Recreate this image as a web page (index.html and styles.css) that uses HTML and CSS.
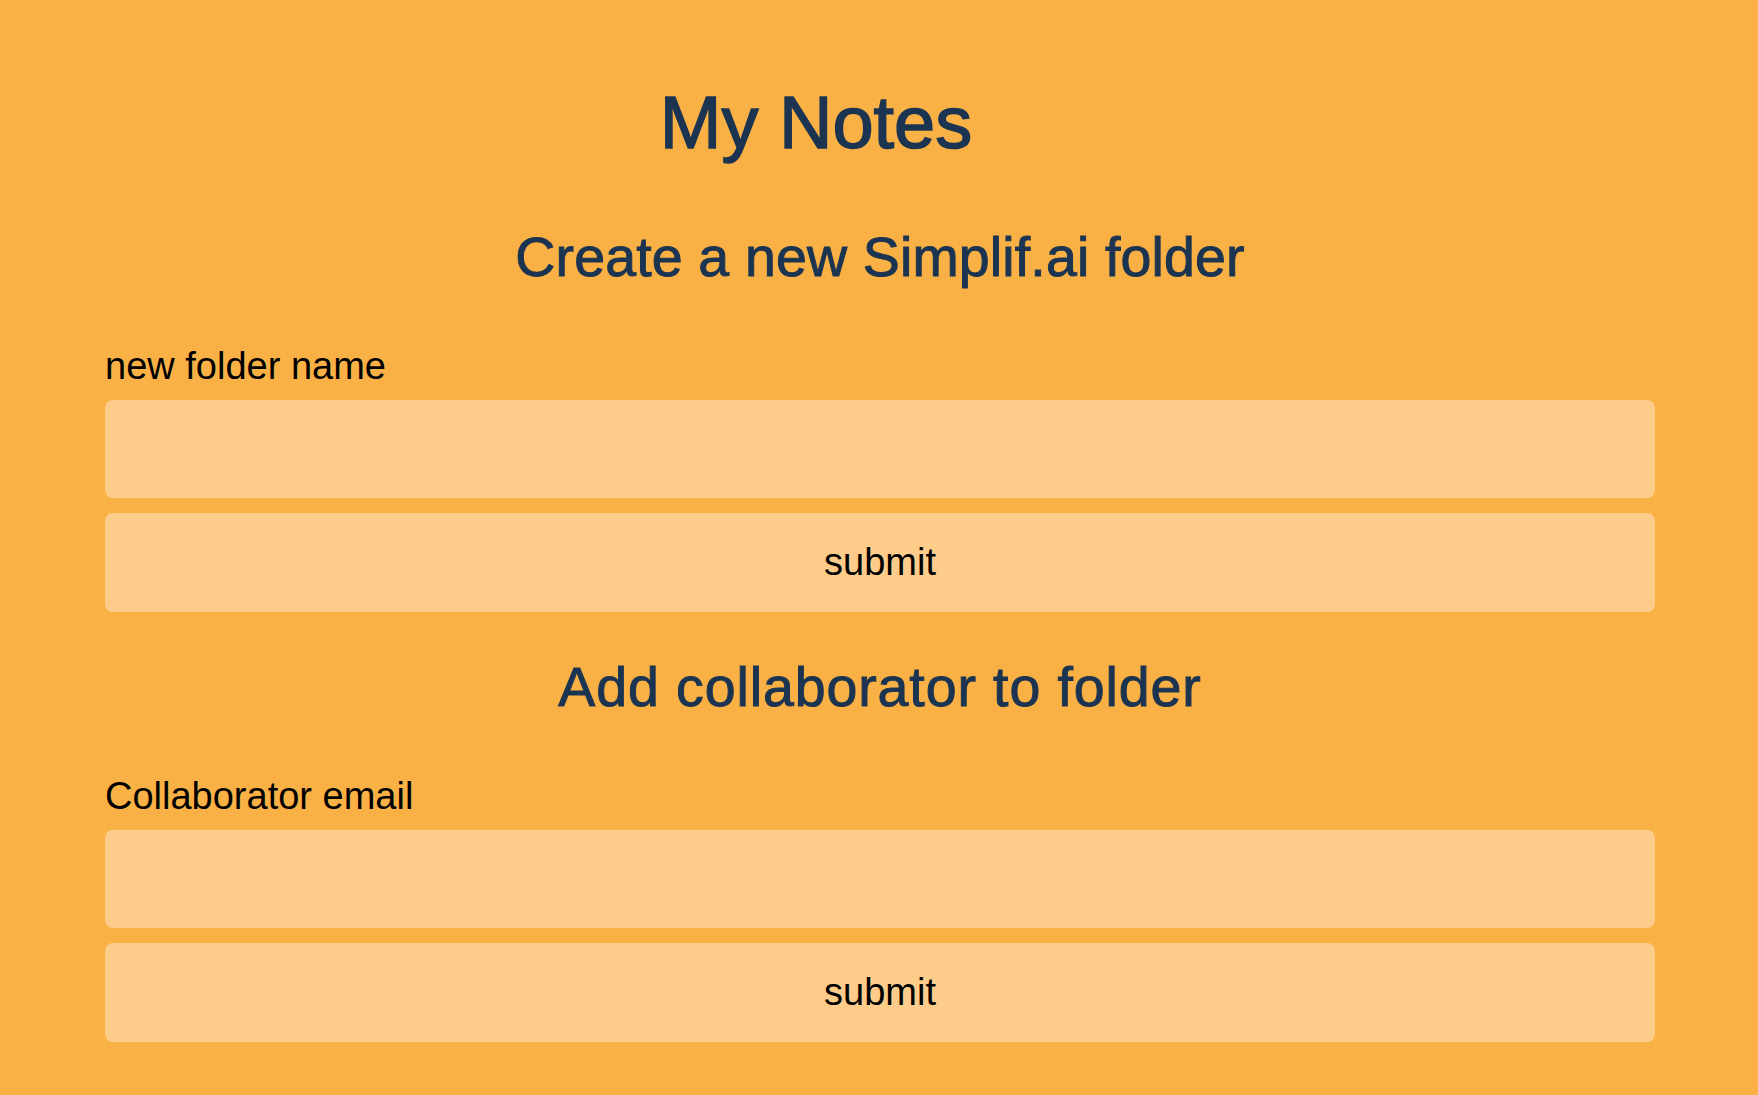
FILE: index.html
```html
<!DOCTYPE html>
<html lang="en">
<head>
<meta charset="utf-8">
<title>My Notes</title>
<link rel="stylesheet" href="styles.css">
</head>
<body>
<main class="page">
  <header class="top">
    <h1 class="title">My Notes</h1>
  </header>
  <section class="panel">
    <h2 class="panel-title">Create a new Simplif.ai folder</h2>
    <form class="form">
      <label class="field-label" for="folder-name">new folder name</label>
      <input class="field-input" id="folder-name" type="text">
      <button class="field-button" type="button">submit</button>
    </form>
  </section>
  <section class="panel panel-second">
    <h2 class="panel-title panel-title-wide">Add collaborator to folder</h2>
    <form class="form">
      <label class="field-label" for="collab-email">Collaborator email</label>
      <input class="field-input" id="collab-email" type="email">
      <button class="field-button" type="button">submit</button>
    </form>
  </section>
</main>
</body>
</html>
```

FILE: styles.css
```css
html, body {
  margin: 0;
  padding: 0;
  background: #f9b146;
}

.page {
  min-height: 1095px;
  box-sizing: border-box;
  padding: 83px 0 0;
  font-family: "Liberation Sans", Arial, sans-serif;
  color: #000;
}

.top {
  padding-right: 126px;
  text-align: center;
}

.title {
  margin: 0 0 62px;
  font-size: 74px;
  line-height: 80px;
  font-weight: normal;
  color: #1b3451;
  -webkit-text-stroke: 1.5px #1b3451;
}

.panel {
  display: flex;
  flex-direction: column;
  padding: 0 103px 0 105px;
}

.panel-second {
  margin-top: 43px;
}

.panel-title {
  margin: 0 0 55px;
  text-align: center;
  font-size: 55.5px;
  line-height: 64px;
  font-weight: normal;
  color: #1b3451;
  -webkit-text-stroke: 1px #1b3451;
  letter-spacing: 0.15px;
}

.panel-title-wide {
  letter-spacing: 0.9px;
}

.form {
  display: flex;
  flex-direction: column;
  margin: 0;
}

.field-label {
  font-size: 38px;
  line-height: 44px;
  margin-bottom: 12px;
  color: #000;
}

.field-input {
  height: 98px;
  box-sizing: border-box;
  border: none;
  border-radius: 8px;
  background: #fdcc8b;
  margin: 0 0 15px;
  padding: 0 20px;
  font-family: inherit;
  font-size: 38px;
  outline: none;
}

.field-button {
  height: 99px;
  box-sizing: border-box;
  border: none;
  border-radius: 8px;
  background: #fdcc8b;
  margin: 0;
  padding: 0;
  font-family: inherit;
  font-size: 38px;
  color: #000;
  cursor: pointer;
}
```
